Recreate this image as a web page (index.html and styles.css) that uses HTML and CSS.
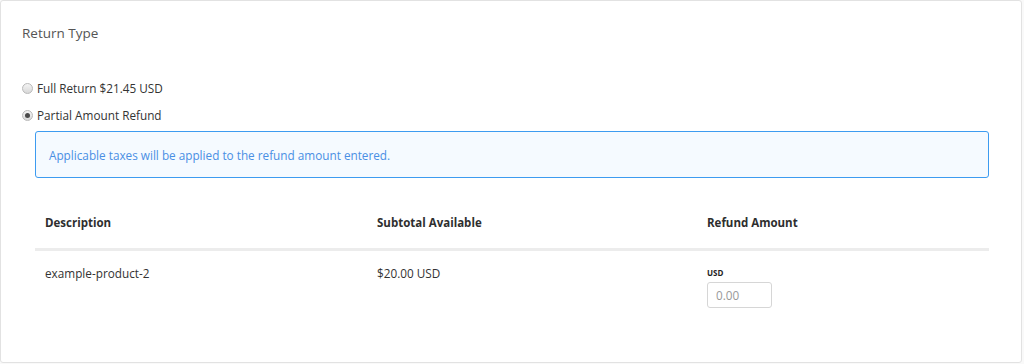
FILE: index.html
```html
<!DOCTYPE html>
<html lang="en">
<head>
  <meta charset="UTF-8" />
  <title>Return Type</title>
  <link rel="stylesheet" href="styles.css">
</head>
<body>
  <section class="card">
    <h2 class="card-title">Return Type</h2>

    <div class="options">
      <label class="option">
        <span class="radio"></span>
        Full Return $21.45 USD
      </label>
      <label class="option">
        <span class="radio checked"></span>
        Partial Amount Refund
      </label>
    </div>

    <div class="partial">
      <div class="alert">Applicable taxes will be applied to the refund amount entered.</div>

      <table class="items">
        <thead>
          <tr>
            <th class="col-desc">Description</th>
            <th class="col-sub">Subtotal Available</th>
            <th>Refund Amount</th>
          </tr>
        </thead>
        <tbody>
          <tr>
            <td>example-product-2</td>
            <td>$20.00 USD</td>
            <td>
              <div class="currency">USD</div>
              <input class="amount" type="text" placeholder="0.00">
            </td>
          </tr>
        </tbody>
      </table>
    </div>
  </section>
</body>
</html>
```

FILE: styles.css
```css
body {
  margin: 0;
  background-color: #f9f9f9;
  font-family: 'Open Sans', sans-serif;
  color: #333;
}
.card {
  box-sizing: border-box;
  width: 1022px;
  height: 363px;
  background-color: #fff;
  border: 1px solid #e2e2e2;
  border-radius: 3px;
  padding: 23px 21px 0 21px;
}
.card-title {
  margin: 0;
  font-size: 13.5px;
  line-height: 18px;
  font-weight: 400;
  color: #555;
}
.options {
  margin-top: 37px;
}
.option {
  display: flex;
  align-items: center;
  height: 18px;
  margin-bottom: 9px;
  font-size: 11.75px;
  color: #333;
}
.option:last-child {
  margin-bottom: 0;
}
.radio {
  box-sizing: border-box;
  width: 11px;
  height: 11px;
  margin-right: 4px;
  border: 1px solid #b9b9b9;
  border-radius: 50%;
  background: linear-gradient(#f4f4f4, #d8d8d8);
  position: relative;
}
.radio.checked::after {
  content: "";
  position: absolute;
  left: 2px;
  top: 2px;
  width: 5px;
  height: 5px;
  border-radius: 50%;
  background-color: #4a4a4a;
}
.partial {
  margin-left: 13px;
  margin-top: 7px;
  width: 954px;
}
.alert {
  box-sizing: border-box;
  height: 47px;
  padding: 0 13px;
  display: flex;
  align-items: center;
  border: 1px solid #3d9bf0;
  border-radius: 3px;
  background-color: #f5faff;
  color: #4a8fe4;
  font-size: 11.75px;
}
.items {
  width: 100%;
  border-collapse: collapse;
  margin-top: 26px;
  font-size: 11.75px;
}
.items th {
  text-align: left;
  font-size: 11.5px;
  font-weight: 700;
  color: #2e2e2e;
  padding: 10px 10px 16px 10px;
  line-height: 18px;
  border-bottom: 3px solid #ececec;
}
.col-desc {
  width: 312px;
}
.col-sub {
  width: 310px;
}
.items td {
  vertical-align: top;
  padding: 14px 10px 0 10px;
  line-height: 16px;
  color: #333;
}
.currency {
  font-size: 8px;
  font-weight: 700;
  color: #222;
  margin-top: 3px;
  line-height: 10px;
}
.amount {
  box-sizing: border-box;
  display: block;
  width: 65px;
  height: 26px;
  margin-top: 4px;
  padding: 0 8px;
  border: 1px solid #d6d6d6;
  border-radius: 3px;
  font-family: 'Open Sans', sans-serif;
  font-size: 11.75px;
  color: #333;
}
.amount::placeholder {
  color: #999;
}
```
